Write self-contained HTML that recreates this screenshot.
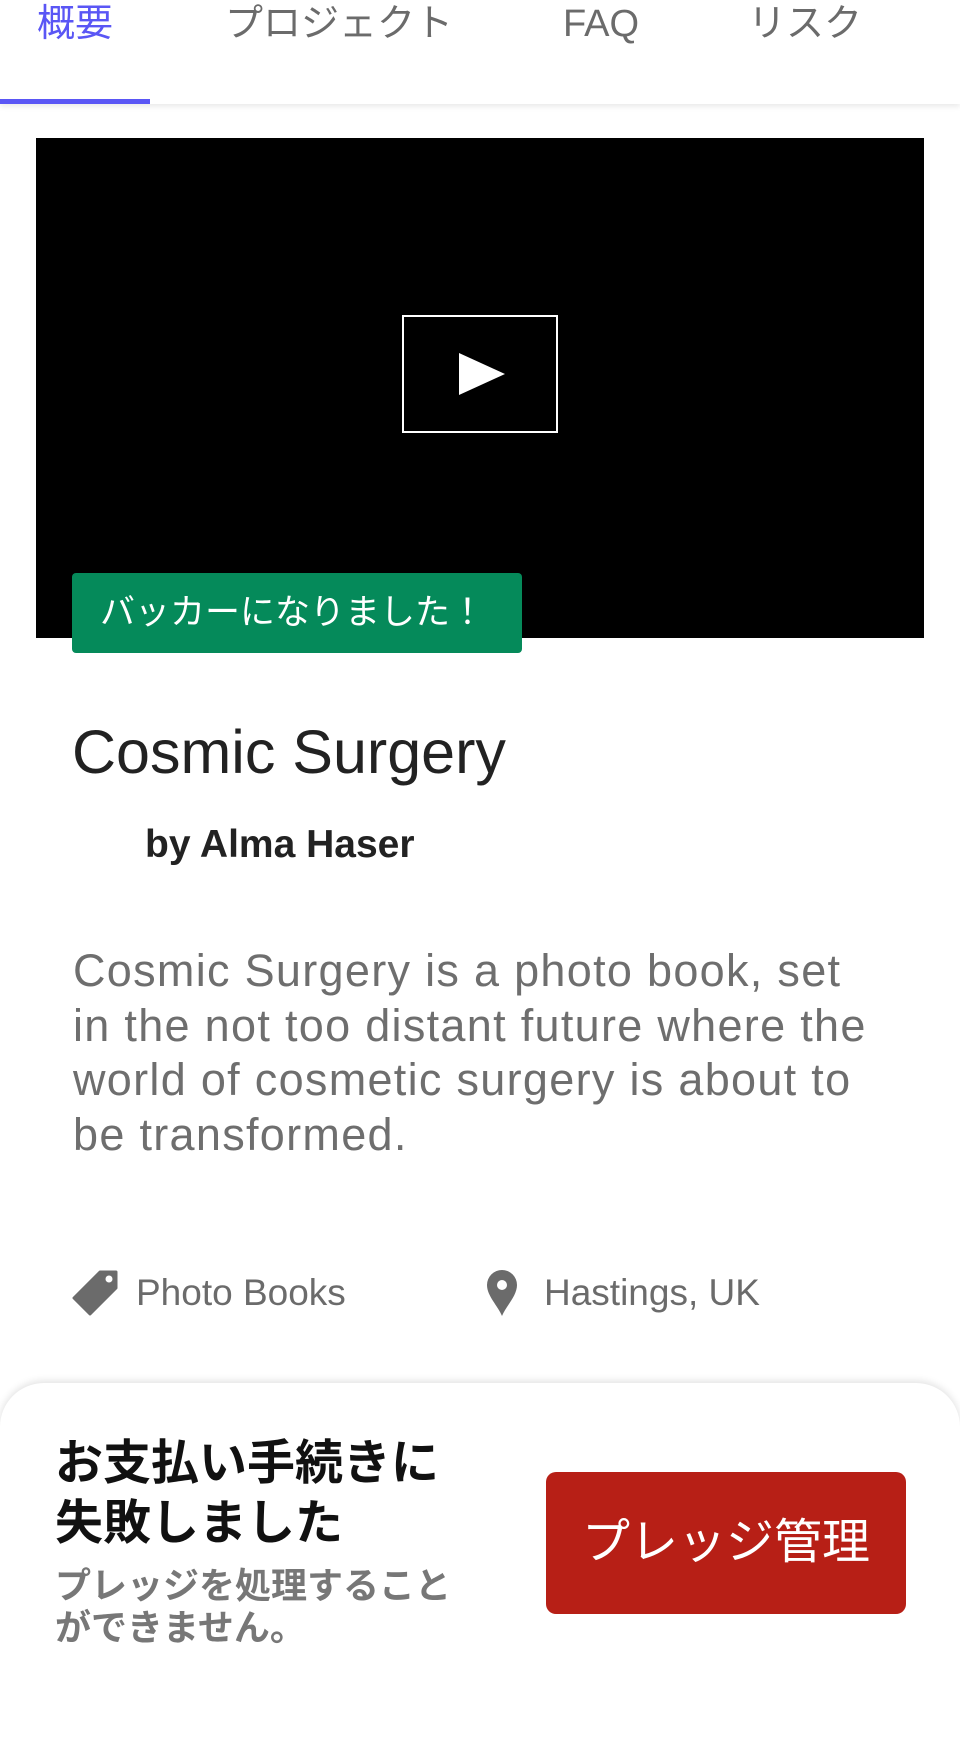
<!DOCTYPE html>
<html><head><meta charset="utf-8"><style>
*{margin:0;padding:0;box-sizing:border-box}
body{width:960px;height:1704px;background:#fff;position:relative;overflow:hidden;font-family:"Liberation Sans","Noto Sans CJK JP",sans-serif}
.a{position:absolute;white-space:nowrap}
.tab{top:2px;font-size:38px;line-height:44px;color:#6b6b6b}
</style></head><body>
<div class="a" style="left:0;top:0;width:960px;height:104px;box-shadow:0 3px 5px rgba(0,0,0,0.08);background:#fff"></div>
<div class="a tab" style="left:37px;color:#5a56f5">概要</div>
<div class="a tab" style="left:225px">プロジェクト</div>
<div class="a tab" style="left:563px">FAQ</div>
<div class="a tab" style="left:748px">リスク</div>
<div class="a" style="left:0;top:99px;width:150px;height:5px;background:#5a56f5"></div>

<div class="a" style="left:36px;top:138px;width:888px;height:500px;background:#000"></div>
<div class="a" style="left:402px;top:315px;width:156px;height:118px;border:2px solid #fff"></div>
<svg class="a" style="left:458px;top:352px" width="48" height="44" viewBox="0 0 48 44"><polygon points="1,1 47,22 1,43" fill="#fff"/></svg>
<div class="a" style="left:72px;top:573px;width:450px;height:80px;background:#058a5a;border-radius:4px;color:#fff;font-size:35px;line-height:80px;padding-left:28px">バッカーになりました！</div>

<div class="a" style="left:72px;top:714px;font-size:61px;line-height:76px;color:#222">Cosmic Surgery</div>
<div class="a" style="left:145px;top:822px;font-size:39px;line-height:46px;font-weight:bold;color:#222">by Alma Haser</div>
<div class="a" style="left:73px;top:944px;width:880px;font-size:45px;line-height:54.5px;letter-spacing:1.3px;color:#6e6e6e;white-space:normal">Cosmic Surgery is a photo book, set<br>in the not too distant future where the<br>world of cosmetic surgery is about to<br>be transformed.</div>

<svg class="a" style="left:72px;top:1270px" width="46" height="46" viewBox="0 0 46 46"><path d="M28 2 L44 2 L44 18 L18 44 L2 28 Z" fill="#6b6b6b" stroke="#6b6b6b" stroke-width="3" stroke-linejoin="round"/><circle cx="37" cy="9" r="3.5" fill="#fff"/></svg>
<div class="a" style="left:136px;top:1271px;font-size:37px;line-height:44px;color:#6b6b6b">Photo Books</div>
<svg class="a" style="left:486px;top:1270px" width="32" height="46" viewBox="0 0 32 46"><path d="M16 46 C12 36 1 26 1 15 A15 15 0 0 1 31 15 C31 26 20 36 16 46Z" fill="#6b6b6b"/><circle cx="16" cy="15" r="5" fill="#fff"/></svg>
<div class="a" style="left:544px;top:1271px;font-size:37px;line-height:44px;color:#6b6b6b">Hastings, UK</div>

<div class="a" style="left:0;top:1383px;width:960px;height:360px;background:#fff;border-radius:44px 44px 0 0;box-shadow:0 -2px 8px rgba(0,0,0,0.12)"></div>
<div class="a" style="left:55px;top:1434px;font-size:48px;line-height:60px;font-weight:bold;color:#111">お支払い手続きに<br>失敗しました</div>
<div class="a" style="left:55px;top:1565px;font-size:36px;line-height:42px;font-weight:bold;color:#777">プレッジを処理すること<br>ができません。</div>
<div class="a" style="left:546px;top:1472px;width:360px;height:142px;background:#b71f16;border-radius:10px;color:#fff;font-size:48px;line-height:142px;text-align:center">プレッジ管理</div>
</body></html>
